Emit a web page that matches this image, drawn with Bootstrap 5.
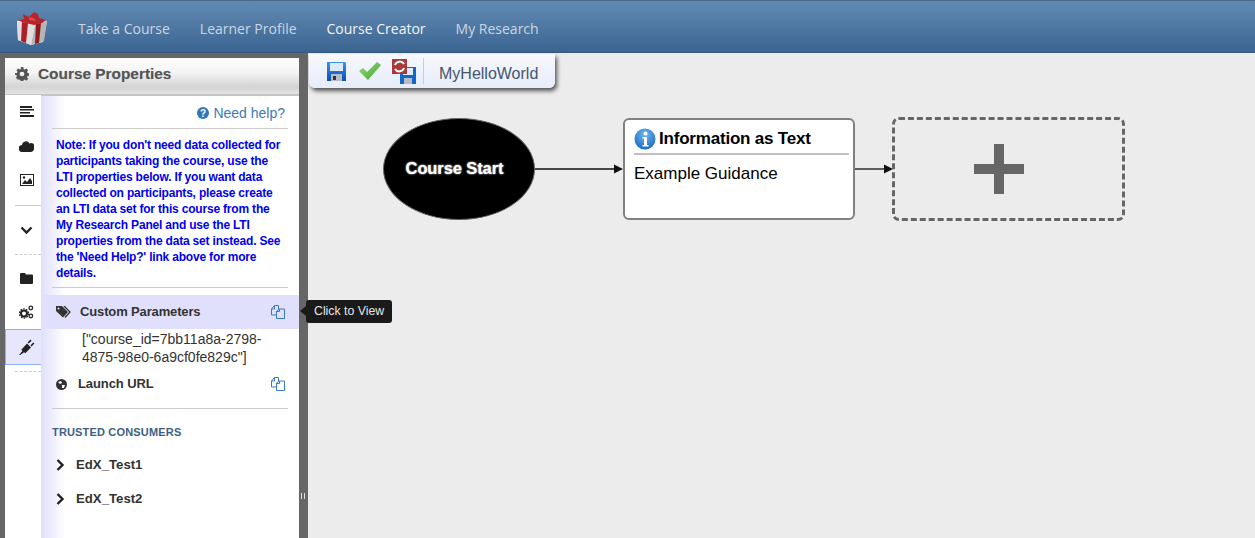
<!DOCTYPE html>
<html lang="en"><head><meta charset="utf-8"><title>Course Creator</title>
<link href="https://cdn.jsdelivr.net/npm/bootstrap@5.3.0/dist/css/bootstrap.min.css" rel="stylesheet">
<style>
html,body{height:538px;overflow:hidden;background:#ececec;font-family:"Liberation Sans",Arial,sans-serif}
.topbar{height:53px;padding:0;background:linear-gradient(#6189b5,#5c85b0 15%,#3b6590);border-top:1px solid #4a6a8c;border-bottom:1px solid #35597e;flex-wrap:nowrap;justify-content:flex-start}
.brandbox{width:78px;height:52px;padding:0 0 0 14px}
.topbar .nav-link{font-family:"Open Sans",sans-serif;font-size:14px;color:#cbd6e2;padding:4px 0 0;margin-right:30px;line-height:52px}
.topbar .nav-link.active{color:#f4f6f8}
.workarea{height:485px}
.sidepane{width:308px;background:#666;padding:5px 9px 0 5px;flex:none;position:relative}
.sidecard{height:100%;background:#fff;border:0;border-radius:0;overflow:hidden}
.sidehead{height:38px;background:linear-gradient(#fff,#f4f4f4 40%,#d4d4d4 80%,#e2e2e2);border-bottom:2px solid #c4c4c4;font-size:15.4px;font-weight:700;color:#555;padding:0 0 5px 10px;gap:9px;text-shadow:0 0 1px #bbb}
.railbar{width:36px;flex:none;background:#fff;margin-top:-1px}
.railitem{height:34px;padding-left:7px;color:#222}
.railitem.on{background:#e6e6fd;border:1px solid #8cb0ec;border-right:0;height:36px;margin-bottom:-1px;padding-left:6px}
.raildiv{border-top:1px solid #ccc;margin:8px 0 7px 10px}
.raildash{border-top:1px dashed #ccc;margin:7px 0 6px 10px}
.propbody{flex:1;min-width:0;background:linear-gradient(90deg,#dfdffd,#fff 24px);position:relative}
.helpline{height:33px;margin:0 11px;border-bottom:1px solid #ccc;color:#3d7ab8;font-size:14px;gap:4px;padding:2px 3px 0 0}
.notetext{margin:0 16px 0 15px;padding:8px 0 6px;color:#0000ee;font-size:12px;font-weight:700;line-height:16px;letter-spacing:-.19px}
.rulegray{margin:0 11px;border-top:1px solid #ccc}
.custrow{height:34px;margin-top:7px;background:#e0e0fd;padding:0 14px 0 15px;font-size:13px;font-weight:700;color:#333;letter-spacing:-.14px}
.parmtext{margin:0 20px 0 41px;font-size:14px;line-height:18px;padding-top:1px;color:#333;height:41px;white-space:nowrap}
.launchrow{height:28px;padding:0 14px 0 15px;font-size:13px;font-weight:700;color:#333;margin-bottom:10px;letter-spacing:-.1px}
.trusthead{margin:14px 0 0 11px;font-size:11px;font-weight:700;color:#3d5f85;height:25px;line-height:18px;letter-spacing:.17px}
.edxrow{height:34px;padding-left:15px;font-size:13.2px;font-weight:700;color:#333;gap:11px}
.tipbox{position:absolute;left:306px;top:247px;background:#1a1a1a;color:#e6e6e6;font-size:12.3px;line-height:23px;height:23px;padding:0 8px;border-radius:3px;white-space:nowrap;z-index:5}
.tipbox::before{content:"";position:absolute;left:-6px;top:6px;border:solid transparent;border-width:5px 6px 5px 0;border-right-color:#1a1a1a}
.gripmark{position:absolute;left:301px;top:440px;width:4px;height:6px;border-left:1px solid #ddd;border-right:1px solid #ddd}
.canvasarea{flex:1;position:relative;background:#ececec;overflow:hidden}
.toolbox{position:absolute;left:1px;top:1px;width:246px;height:34px;background:linear-gradient(#f8f8fe,#e6ecfa);border-radius:0 0 6px 6px;box-shadow:2px 3px 4px #555;padding-left:18px;font-size:16px;color:#44566c}
.toolsave{margin-right:13px}
.toolcheck{margin-right:11px}
.toolsep{width:1px;height:26px;background:#ccc;margin:0 15px 0 7px}
.toolname{padding-top:6px}
.flowsvg{position:absolute;left:0;top:0}
.startnode{position:absolute;left:75px;top:65px;width:152px;height:102px;border-radius:50%;background:#000;border:1px solid #666;color:#fff;font-size:16.5px;font-weight:700;text-shadow:0 0 2px #fff;padding:0 9px 2px 0;letter-spacing:-.1px}
.infonode{position:absolute;left:315px;top:65px;width:232px;height:102px;background:#fff;border:2px solid #808080;border-radius:6px;padding:4px 4px 0 9px;color:#000}
.infotitle{font-size:17px;font-weight:700;height:31px;border-bottom:2px solid #c0c0c0;gap:3px;letter-spacing:-.2px}
.infobody{font-size:17px;padding-top:8px;line-height:22px}
.addnode{position:absolute;left:584px;top:64px;width:233px;height:104px;border:3px dashed #666;border-radius:7px;padding:0 19px 0 0}
</style></head><body>
<nav class="navbar topbar d-flex align-items-center">
 <div class="brandbox d-flex align-items-center">
  <svg width="36" height="36" viewBox="0 0 36 36"><path d="M3 12l13-3 17 3-4 21-12 3-13-5z" fill="#e8e8e8"/><path d="M21 15l12-3-3 20-13 4z" fill="#b5b5b5"/><path d="M3 12l18 3-4 21-13-5z" fill="#dedede"/><path d="M8 13l6 1-2 20-5-2z" fill="#ad1f25"/><path d="M22 15l5-1-2 20-4 1z" fill="#8e1a1f"/><path d="M9 5l6 3 5-5 4 2 1 4 7 2-4 3-8 2-12-3-4-2 6-1z" fill="#b8242a"/><path d="M15 8l5 1 2 3-7-1z" fill="#e0474c"/></svg>
 </div>
 <div class="navbar-nav flex-row">
  <a class="nav-link" href="#">Take a Course</a>
  <a class="nav-link" href="#">Learner Profile</a>
  <a class="nav-link active" href="#">Course Creator</a>
  <a class="nav-link" href="#">My Research</a>
 </div>
</nav>
<div class="workarea d-flex">
 <aside class="sidepane">
  <div class="sidecard d-flex flex-column">
   <div class="sidehead d-flex align-items-center">
    <svg width="14" height="14" viewBox="0 0 16 16" fill="#555"><path fill-rule="evenodd" d="M6.600 0h2.800l.4 2.200 1.300.6L13 1.600l2 2-1.200 1.900.6 1.300 2.200.4v2.800l-2.200.4-.6 1.300 1.200 1.900-2 2-1.900-1.200-1.300.6-.4 2.200H6.600l-.4-2.200-1.300-.6L3 14.400l-2-2 1.200-1.900-.6-1.300L0 8.800V6.900l2.200-.1.6-1.300L1.600 3.600l2-2 1.900 1.200 1.300-.6zM8 5.300a2.700 2.700 0 100 5.400 2.700 2.700 0 000-5.400z"/></svg>
    <span>Course Properties</span>
   </div>
   <div class="d-flex flex-grow-1">
    <div class="railbar">
     <div class="railitem d-flex align-items-center justify-content-center"><svg width="14" height="12" viewBox="0 0 14 12" fill="#222"><path d="M0 0h12v2H0zM0 3h14v1.500H0zM0 6h10v1.500H0zM0 9h14v2H0z"/></svg></div>
     <div class="railitem d-flex align-items-center justify-content-center"><svg width="15" height="11" viewBox="0 0 15 11" fill="#222"><path d="M3.500 11a3.500 3.500 0 01-.5-7 4 4 0 017.500-1.500A3 3 0 0115 6a4 4 0 01-3 5z"/></svg></div>
     <div class="railitem d-flex align-items-center justify-content-center"><svg width="14" height="12" viewBox="0 0 14 12"><rect x=".5" y=".5" width="13" height="11" fill="#fff" stroke="#222"/><path d="M2 10l3-4 2 2 3-4 2 3v3z" fill="#222"/><circle cx="4" cy="3.500" r="1.200" fill="#222"/></svg></div>
     <div class="raildiv"></div>
     <div class="railitem d-flex align-items-center justify-content-center"><svg width="13" height="9" viewBox="0 0 13 9"><path d="M1.500 1.500l5 5 5-5" fill="none" stroke="#222" stroke-width="2.400"/></svg></div>
     <div class="raildash"></div>
     <div class="railitem d-flex align-items-center justify-content-center"><svg width="13" height="11" viewBox="0 0 13 11" fill="#222"><path d="M1 0h4l1 1.500h6a1 1 0 011 1V10a1 1 0 01-1 1H1a1 1 0 01-1-1V1a1 1 0 011-1z"/></svg></div>
     <div class="railitem d-flex align-items-center justify-content-center"><svg width="15" height="14" viewBox="0 0 15 14"><circle cx="5" cy="8.500" r="3" fill="none" stroke="#222" stroke-width="2"/><circle cx="5" cy="8.500" r="4.600" fill="none" stroke="#222" stroke-width="1.200" stroke-dasharray="1.600 1.290"/><circle cx="11.800" cy="3" r="1.800" fill="none" stroke="#222" stroke-width="1.300"/><circle cx="11.800" cy="11" r="1.800" fill="none" stroke="#222" stroke-width="1.300"/></svg></div>
     <div class="railitem on d-flex align-items-center justify-content-center"><svg width="16" height="16" viewBox="0 0 14 14" fill="#222"><path d="M0 14l3-3.500-1-1L7 4l3.500 3.500-5 5-1-1L1 14zM7.500 3L10 .5l1 1L8.500 4zM10 5.500L12.500 3l1 1L11 6.500z"/></svg></div>
     <div class="raildash"></div>
    </div>
    <div class="propbody">
     <div class="helpline d-flex align-items-center justify-content-end">
      <svg width="12" height="12" viewBox="0 0 12 12"><circle cx="6" cy="6" r="6" fill="#2f77b5"/><text x="6" y="9.500" text-anchor="middle" font-size="10" font-weight="700" fill="#fff" font-family="Liberation Sans">?</text></svg>
      <span>Need help?</span>
     </div>
     <div class="notetext">Note: If you don't need data collected for participants taking the course, use the LTI properties below. If you want data collected on participants, please create an LTI data set for this course from the My Research Panel and use the LTI properties from the data set instead. See the 'Need Help?' link above for more details.</div>
     <div class="rulegray"></div>
     <div class="custrow d-flex align-items-center justify-content-between">
      <span class="d-flex align-items-center" style="gap:9px"><svg width="15" height="12" viewBox="0 0 15 12"><path d="M0 0h6l6 6-5 5.500L0 5z" fill="#333"/><circle cx="2.500" cy="2.500" r="1" fill="#e0e0fd"/><path d="M8 0l6 6-5 5.500" fill="none" stroke="#333" stroke-width="1.300"/></svg>Custom Parameters</span>
      <svg width="14" height="14" viewBox="0 0 14 14" fill="none" stroke="#3d7ac4"><path d="M5.500 10H.5V4L3.500.5h4V4M5.500 13.500v-7.500L8.500 4h5v9.500z"/><path d="M3.500.5V4H.5M8.500 4v2.500h-3"/></svg>
     </div>
     <div class="parmtext">["course_id=7bb11a8a-2798-<br>4875-98e0-6a9cf0fe829c"]</div>
     <div class="launchrow d-flex align-items-center justify-content-between">
      <span class="d-flex align-items-center" style="gap:11px"><svg width="11" height="11" viewBox="0 0 11 11"><circle cx="5.500" cy="5.500" r="5.500" fill="#333"/><path d="M2 3l3-1 1 2-2 1zM6 6l3 0-1 3-2 0z" fill="#fff"/></svg>Launch URL</span>
      <svg width="14" height="14" viewBox="0 0 14 14" fill="none" stroke="#3d7ac4"><path d="M5.500 10H.5V4L3.500.5h4V4M5.500 13.500v-7.500L8.500 4h5v9.500z"/><path d="M3.500.5V4H.5M8.500 4v2.500h-3"/></svg>
     </div>
     <div class="rulegray"></div>
     <div class="trusthead">TRUSTED CONSUMERS</div>
     <div class="edxrow d-flex align-items-center"><svg width="9" height="12" viewBox="0 0 9 12"><path d="M1.500 1l5 5-5 5" fill="none" stroke="#222" stroke-width="2.400"/></svg>EdX_Test1</div>
     <div class="edxrow d-flex align-items-center"><svg width="9" height="12" viewBox="0 0 9 12"><path d="M1.500 1l5 5-5 5" fill="none" stroke="#222" stroke-width="2.400"/></svg>EdX_Test2</div>
    </div>
   </div>
  </div>
  <div class="tipbox">Click to View</div>
  <div class="gripmark"></div>
 </aside>
 <main class="canvasarea">
  <svg class="flowsvg" width="947" height="485">
   <path d="M226 116H307" stroke="#111" stroke-width="1.300"/><path d="M306 111.500l9 4.500-9 4.500z" fill="#111"/>
   <path d="M546 116H576" stroke="#111" stroke-width="1.300"/><path d="M576 111.500l9 4.500-9 4.500z" fill="#111"/>
  </svg>
  <div class="toolbox d-flex align-items-center">
   <svg width="19" height="19" viewBox="0 0 19 19" class="toolsave"><defs><linearGradient id="dk" x1="0" y1="0" x2="0" y2="1"><stop offset="0" stop-color="#3a93e8"/><stop offset="1" stop-color="#0a50b4"/></linearGradient></defs><path d="M0 0h18l1 1v18H0z" fill="url(#dk)"/><rect x="3" y="1" width="13" height="8" fill="#dfeaf8"/><rect x="4" y="12" width="11" height="7" fill="#b8bcc4"/><rect x="6" y="14" width="3" height="4" fill="#334"/></svg>
   <svg width="22" height="18" viewBox="0 0 22 18" class="toolcheck"><defs><linearGradient id="ck" x1="0" y1="0" x2="1" y2="1"><stop offset="0" stop-color="#9bdc7c"/><stop offset="1" stop-color="#3ea52c"/></linearGradient></defs><path d="M0 9l4-3 4 4L18 0l4 3L9 18z" fill="url(#ck)"/></svg>
   <svg width="24" height="25" viewBox="0 0 24 25"><rect x="8" y="8" width="16" height="17" fill="#1167c8"/><rect x="11" y="9" width="10" height="7" fill="#dfeaf8"/><rect x="12" y="19" width="8" height="6" fill="#b8bcc4"/><rect x="0" y="0" width="15" height="15" fill="#a83a38"/><path d="M3 6a5 5 0 019-1M12 9a5 5 0 01-9 1" stroke="#fff" stroke-width="2" fill="none"/></svg>
   <div class="toolsep"></div>
   <span class="toolname">MyHelloWorld</span>
  </div>
  <div class="startnode d-flex align-items-center justify-content-center">Course Start</div>
  <div class="infonode">
   <div class="infotitle d-flex align-items-center">
    <svg width="22" height="22" viewBox="0 0 22 22"><defs><radialGradient id="ig" cx=".5" cy=".3" r=".8"><stop offset="0" stop-color="#6fb6f2"/><stop offset="1" stop-color="#0f62b8"/></radialGradient></defs><circle cx="11" cy="11" r="10.500" fill="url(#ig)"/><circle cx="11.500" cy="5.500" r="2" fill="#fff"/><path d="M8.500 9h4.500v8h1.500v1.500h-6V17H10v-6.500H8.500z" fill="#fff"/></svg>
    <span>Information as Text</span>
   </div>
   <div class="infobody">Example Guidance</div>
  </div>
  <div class="addnode d-flex align-items-center justify-content-center">
   <svg width="50" height="50" viewBox="0 0 50 50" fill="#666"><path d="M20 0h10v20h20v10H30v20H20V30H0V20h20z"/></svg>
  </div>
 </main>
</div>
<script src="https://cdn.jsdelivr.net/npm/bootstrap@5.3.0/dist/js/bootstrap.bundle.min.js"></script>
</body></html>
